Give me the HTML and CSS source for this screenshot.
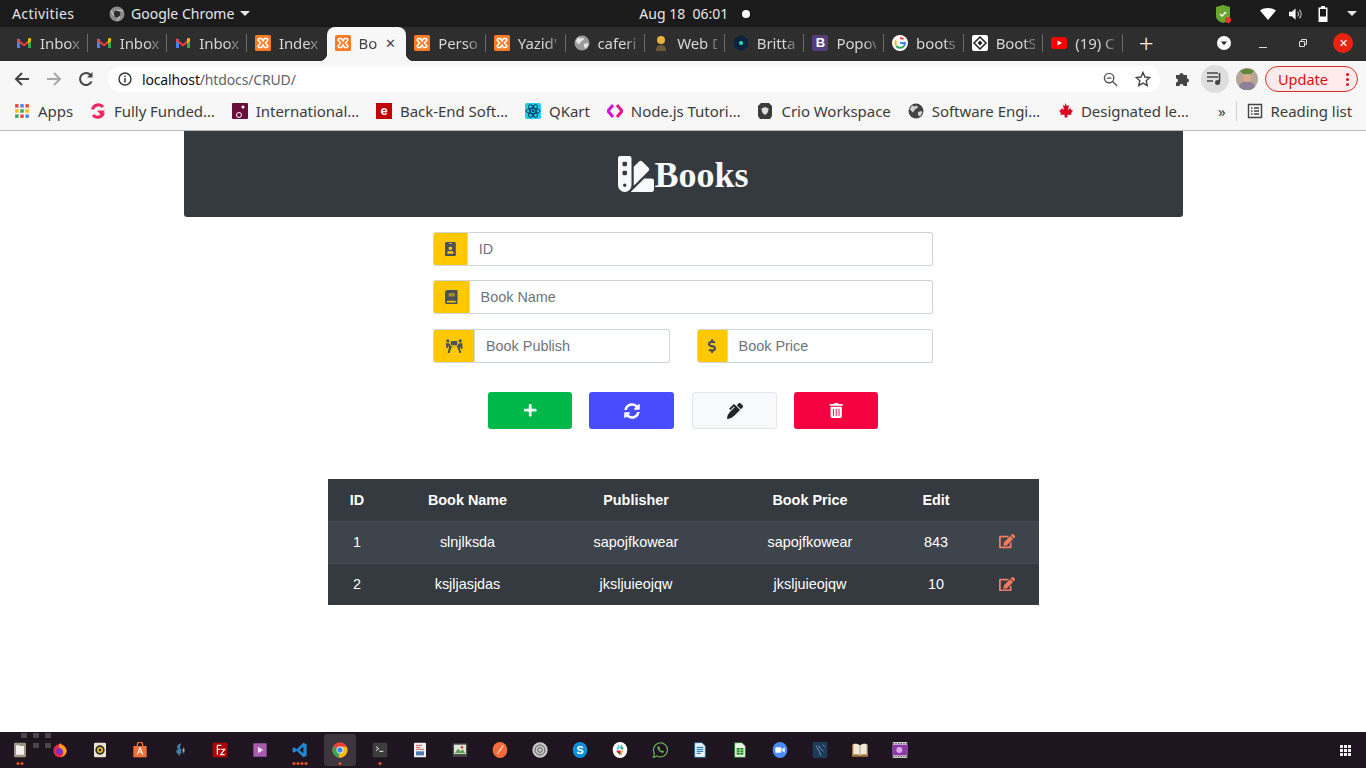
FILE: index.html
```html
<!DOCTYPE html>
<html lang="en">
<head>
    <meta charset="UTF-8">
    <title>Books</title>
    <link rel="stylesheet" href="styles.css">
</head>
<body>
    <svg class="defs" width="0" height="0">
        <symbol id="i-gmail" viewBox="0 0 16 16">
            <path d="M1 4v9h3V4z" fill="#4285f4"/><path d="M12 4v9h3V4z" fill="#34a853"/>
            <path d="M1 3l7 6 7-6v3L8 11.5 1 6z" fill="#ea4335"/><path d="M12 3.5l3-.5v3l-3 2.4z" fill="#fbbc04"/>
        </symbol>
        <symbol id="i-xampp" viewBox="0 0 16 16">
            <rect width="16" height="16" rx="1.5" fill="#fb7a24"/>
            <path d="M4 3.5h2.5L8 6l1.5-2.5H12l1 1.5-2.5 3 2.5 3-1 1.5H9.500L8 10l-1.500 2.500H4L3 11l2.500-3L3 5z" fill="none" stroke="#fff" stroke-width="1.500"/>
        </symbol>
        <symbol id="i-chrome" viewBox="0 0 24 24">
            <circle cx="12" cy="12" r="11.500" fill="#ea4335"/>
            <path d="M12 12L2 6.500A11.500 11.500 0 0 0 10 23.300z" fill="#34a853"/>
            <path d="M12 7h10A11.500 11.500 0 0 1 10 23.300z" fill="#fbbc04"/>
            <circle cx="12" cy="12" r="5.200" fill="#fff"/><circle cx="12" cy="12" r="4" fill="#4285f4"/>
        </symbol>
        <symbol id="i-globe" viewBox="0 0 16 16">
            <circle cx="8" cy="8" r="7.500" fill="currentColor"/>
            <path d="M4 2.500l3 1 2-1 1 2-3 2-2 3-2-2-1.500-1zM10 9l3.500-1 1 1.500-2.500 4-2-1.500z" fill="#fff" opacity=".75"/>
        </symbol>
        <symbol id="i-edit" viewBox="0 0 576 512">
            <path fill="currentColor" d="M402.6 83.2l90.2 90.2c3.8 3.8 3.8 10 0 13.8L274.4 405.6l-92.8 10.3c-12.4 1.4-22.9-9.1-21.5-21.5l10.3-92.8L388.8 83.2c3.8-3.8 10-3.8 13.8 0zm162-22.9l-48.8-48.8c-15.2-15.2-39.9-15.2-55.2 0l-35.4 35.4c-3.8 3.8-3.8 10 0 13.8l90.2 90.2c3.8 3.8 10 3.8 13.8 0l35.4-35.4c15.2-15.3 15.2-40 0-55.2zM384 346.2V448H64V128h229.8c3.2 0 6.2-1.3 8.5-3.5l40-40c7.6-7.6 2.2-20.5-8.5-20.5H48C21.5 64 0 85.5 0 112v352c0 26.5 21.5 48 48 48h352c26.5 0 48-21.5 48-48V306.2c0-10.7-12.9-16-20.5-8.5l-40 40c-2.2 2.3-3.5 5.3-3.5 8.500z"/>
        </symbol>
    </svg>

    <!-- desktop top bar -->
    <div class="topbar">
        <span class="activities">Activities</span>
        <span class="app-name">
            <svg class="app-icon" viewBox="0 0 16 16"><circle cx="8" cy="8" r="7.500" fill="#8a8a8a"/><circle cx="8" cy="8" r="3.200" fill="#2c2c2c"/><path d="M8 4.500h6M5 10L2 4.500M11 10l-3 5" stroke="#c4c4c4" stroke-width="1.200"/></svg>
            Google Chrome
            <span class="caret"></span>
        </span>
        <span class="clock">Aug 18&nbsp;&nbsp;06:01<span class="clock-dot"></span></span>
        <span class="tray">
            <svg class="tray-shield" viewBox="0 0 16 18"><path d="M1 2l7-2 7 2v9c0 4-4 6-7 7-3-1-7-3-7-7z" fill="#6aa62e"/><path d="M5 9l2 2 4-4" fill="none" stroke="#fff" stroke-width="1.500"/><circle cx="13" cy="15" r="3" fill="#e8352b"/></svg>
            <svg class="tray-wifi" viewBox="0 0 16 12"><path d="M0 2.500C4-.8 12-.8 16 2.500L8 12z" fill="#fff"/></svg>
            <svg class="tray-vol" viewBox="0 0 16 14"><path d="M0 4.500h3L7 1v12L3 9.500H0z" fill="#fff"/><path d="M9 4.500a3 3 0 0 1 0 5M11 2.500a6 6 0 0 1 0 9" fill="none" stroke="#bbb" stroke-width="1.200"/></svg>
            <svg class="tray-batt" viewBox="0 0 10 16"><path d="M3 0h4v1.500h2.500V16H.5V1.500H3z" fill="#fff"/><rect x="2" y="3" width="6" height="7.500" fill="#1a1a1a"/></svg>
            <span class="caret"></span>
        </span>
    </div>

    <!-- chrome tab strip -->
    <div class="tabstrip">
        <div class="tabs">
            <div class="tab"><svg class="fav"><use href="#i-gmail"/></svg><span class="tab-title">Inbox</span></div>
            <div class="tab"><svg class="fav"><use href="#i-gmail"/></svg><span class="tab-title">Inbox</span></div>
            <div class="tab"><svg class="fav"><use href="#i-gmail"/></svg><span class="tab-title">Inbox</span></div>
            <div class="tab no-sep"><svg class="fav"><use href="#i-xampp"/></svg><span class="tab-title">Index</span></div>
            <div class="tab active"><svg class="fav"><use href="#i-xampp"/></svg><span class="tab-title">Bo</span><span class="tab-close">✕</span></div>
            <div class="tab"><svg class="fav"><use href="#i-xampp"/></svg><span class="tab-title">Perso</span></div>
            <div class="tab"><svg class="fav"><use href="#i-xampp"/></svg><span class="tab-title">Yazid'</span></div>
            <div class="tab"><svg class="fav tab-globe"><use href="#i-globe"/></svg><span class="tab-title">caferi</span></div>
            <div class="tab">
                <svg class="fav" viewBox="0 0 16 16"><circle cx="8" cy="5" r="4" fill="#e8b23c"/><path d="M3 16c0-5 2-6 5-6s5 1 5 6z" fill="#6b5a3a"/></svg>
                <span class="tab-title">Web D</span>
            </div>
            <div class="tab">
                <svg class="fav" viewBox="0 0 16 16"><path d="M8 0l7 4v8l-7 4-7-4V4z" fill="#0c2340"/><circle cx="8" cy="8" r="2" fill="#2fe0b0"/></svg>
                <span class="tab-title">Britta</span>
            </div>
            <div class="tab">
                <span class="fav fav-boot">B</span>
                <span class="tab-title">Popov</span>
            </div>
            <div class="tab">
                <svg class="fav" viewBox="0 0 16 16"><circle cx="8" cy="8" r="8" fill="#fff"/><path d="M8 3a5 5 0 0 1 3.400 1.300" fill="none" stroke="#ea4335" stroke-width="2"/><path d="M4 5.500a5 5 0 0 0 0 5" fill="none" stroke="#fbbc04" stroke-width="2"/><path d="M4.200 11A5 5 0 0 0 11.500 11.500" fill="none" stroke="#34a853" stroke-width="2"/><path d="M8 8h5a5 5 0 0 1-1.500 3.500" fill="none" stroke="#4285f4" stroke-width="2"/></svg>
                <span class="tab-title">boots</span>
            </div>
            <div class="tab">
                <svg class="fav" viewBox="0 0 16 16"><rect width="16" height="16" rx="2" fill="#fff"/><path d="M8 2l6 6-6 6-6-6z" fill="none" stroke="#222" stroke-width="1.500"/><path d="M8 5.500L10.500 8 8 10.500 5.500 8z" fill="#222"/></svg>
                <span class="tab-title">BootS</span>
            </div>
            <div class="tab">
                <svg class="fav" viewBox="0 0 16 16"><rect y="2" width="16" height="12" rx="3" fill="#f00"/><path d="M6.500 5.500L11 8l-4.500 2.500z" fill="#fff"/></svg>
                <span class="tab-title">(19) C</span>
            </div>
        </div>
        <span class="new-tab">+</span>
        <span class="win-controls">
            <svg class="tab-search" viewBox="0 0 18 18"><circle cx="9" cy="9" r="9" fill="#fff"/><path d="M5 7h8l-4 5z" fill="#2f2e2e"/></svg>
            <span class="win-min"></span>
            <svg class="win-max" viewBox="0 0 8 8"><path d="M.5 2.500h5v5h-5zM2.500 2.500v-2h5v5h-2" fill="none" stroke="#ddd"/></svg>
            <span class="win-close">✕</span>
        </span>
    </div>

    <!-- chrome toolbar -->
    <div class="toolbar">
        <svg class="nav-icon" viewBox="0 0 16 16"><path d="M15 8H2M8 2L2 8l6 6" fill="none" stroke="#444" stroke-width="2"/></svg>
        <svg class="nav-icon" viewBox="0 0 16 16"><path d="M1 8h13M8 2l6 6-6 6" fill="none" stroke="#a8a8a8" stroke-width="2"/></svg>
        <svg class="nav-icon" viewBox="0 0 16 16"><path d="M13.500 10.500A6 6 0 1 1 12.500 4" fill="none" stroke="#444" stroke-width="2"/><path d="M14.500 1v5.500H9z" fill="#444"/></svg>
        <div class="omnibox">
            <svg class="info-icon" viewBox="0 0 14 14"><circle cx="7" cy="7" r="6" fill="none" stroke="#333" stroke-width="1.400"/><path d="M7 6v4.500M7 3.500v1.500" stroke="#333" stroke-width="1.500"/></svg>
            <span class="url">localhost<span class="url-path">/htdocs/CRUD/</span></span>
            <svg class="omni-zoom" viewBox="0 0 16 16"><circle cx="6.500" cy="6.500" r="5" fill="none" stroke="#555" stroke-width="1.500"/><path d="M10.500 10.500L15 15M4 6.500h5" stroke="#555" stroke-width="1.500"/></svg>
            <svg class="omni-star" viewBox="0 0 16 16"><path d="M8 1.500l2 4.500 4.800.5-3.600 3.200 1 4.800L8 12.100l-4.200 2.400 1-4.800L1.200 6.500 6 6z" fill="none" stroke="#444" stroke-width="1.400"/></svg>
        </div>
        <svg class="puzzle" viewBox="0 0 16 16"><path d="M1 4h3.500a2 2 0 1 1 4 0H12v3.500a2 2 0 1 1 0 4V15H8.500a2 2 0 1 0-4 0H1v-3.500a2 2 0 1 0 0-4z" fill="#444"/></svg>
        <span class="media-btn">
            <svg viewBox="0 0 16 14"><path d="M0 1h11M0 5h11M0 9h6" stroke="#444" stroke-width="1.600"/><path d="M12.500 1v9" stroke="#444" stroke-width="1.600"/><circle cx="10.500" cy="10.500" r="2.500" fill="#444"/></svg>
        </span>
        <svg class="avatar" viewBox="0 0 22 22"><circle cx="11" cy="11" r="11" fill="#b8a595"/><path d="M4 3a11 11 0 0 1 14 0l-3 3H7z" fill="#5d8a3c"/><circle cx="11" cy="10" r="4" fill="#d9ab8b"/><path d="M3 19c1-5 4-5 8-5s7 0 8 5a11 11 0 0 1-16 0z" fill="#8d8098"/></svg>
        <span class="update-btn">Update<span class="update-dots"><i></i><i></i><i></i></span></span>
    </div>

    <!-- bookmarks bar -->
    <div class="bookmarks">
        <span class="bm">
            <svg class="fav" viewBox="0 0 14 14">
                <path d="M1 1h3v3H1z" fill="#ea4335"/><path d="M5.500 1h3v3h-3z" fill="#4285f4"/><path d="M10 1h3v3h-3z" fill="#ea4335"/>
                <path d="M1 5.500h3v3H1z" fill="#fbbc04"/><path d="M5.500 5.500h3v3h-3z" fill="#34a853"/><path d="M10 5.500h3v3h-3z" fill="#fbbc04"/>
                <path d="M1 10h3v3H1z" fill="#34a853"/><path d="M5.500 10h3v3h-3z" fill="#ea4335"/><path d="M10 10h3v3h-3z" fill="#4285f4"/>
            </svg>Apps
        </span>
        <span class="bm">
            <svg class="fav" viewBox="0 0 16 16"><path d="M13 4A6 6 0 0 0 2.500 6.500M3 12a6 6 0 0 0 10.500-2.500" fill="none" stroke="#f0245f" stroke-width="3"/><path d="M7 7.500h8L11 12z" fill="#f0245f"/></svg>Fully Funded…
        </span>
        <span class="bm">
            <svg class="fav" viewBox="0 0 16 16"><rect width="16" height="16" rx="1" fill="#6a0f3c"/><circle cx="11" cy="4" r="1.500" fill="#fff"/><circle cx="7" cy="12" r="2.500" fill="none" stroke="#fff"/></svg>International…
        </span>
        <span class="bm">
            <span class="fav fav-edx">e</span>Back-End Soft…
        </span>
        <span class="bm">
            <svg class="fav" viewBox="0 0 16 16"><rect width="16" height="16" rx="2" fill="#22cfe8"/><g fill="none" stroke="#0b3d66"><ellipse cx="8" cy="8" rx="7" ry="2.700"/><ellipse cx="8" cy="8" rx="7" ry="2.700" transform="rotate(60 8 8)"/><ellipse cx="8" cy="8" rx="7" ry="2.700" transform="rotate(120 8 8)"/></g><circle cx="8" cy="8" r="1.300" fill="#0b3d66"/></svg>QKart
        </span>
        <span class="bm">
            <svg class="fav" viewBox="0 0 16 16"><path d="M6 2L1 8l5 6" fill="none" stroke="#d014e0" stroke-width="3"/><path d="M10 2l5 6-5 6" fill="none" stroke="#f0148c" stroke-width="3"/></svg>Node.js Tutori…
        </span>
        <span class="bm">
            <svg class="fav" viewBox="0 0 16 16"><path d="M1 3l3-3h8l3 3v10l-2 3H3l-2-3z" fill="#3b3b3b"/><path d="M8 4l3.500 1.500C11.500 9 10 11 8 12 6 11 4.500 9 4.500 5.500z" fill="#ddd"/></svg>Crio Workspace
        </span>
        <span class="bm">
            <svg class="fav bm-globe"><use href="#i-globe"/></svg>Software Engi…
        </span>
        <span class="bm">
            <svg class="fav" viewBox="0 0 16 16"><path d="M8 0l2 3 2-1-1 5 2.500-2 .5 2 2 .5-2 3 .5 1.500-4-.5-.2 3H7.700l-.2-3-4 .5.500-1.500-2-3 2-.5.500-2L7 7 6 2l2 1z" fill="#d80621"/></svg>Designated le…
        </span>
        <span class="bm-more">»</span>
        <span class="bm-sep"></span>
        <span class="bm">
            <svg class="fav" viewBox="0 0 16 16"><path d="M1.500 1.500h13v13h-13z" fill="none" stroke="#444" stroke-width="1.400"/><path d="M4 5h1.500M7 5h5M4 8h1.500M7 8h5M4 11h1.500M7 11h5" stroke="#444" stroke-width="1.400"/></svg>Reading list
        </span>
    </div>

    <!-- the actual page -->
    <main class="page">
        <header class="page-header">
            <h1 class="page-title">
                <svg class="title-icon" viewBox="0 0 512 512"><path fill="currentColor" d="M434.66,167.71h0L344.5,77.36a31.83,31.83,0,0,0-45-.07h0l-.07.07L224,152.88V424L434.66,212.9A32,32,0,0,0,434.66,167.71ZM480,320H373.09L186.68,506.51c-2.06,2.07-4.5,3.58-6.68,5.49H480a32,32,0,0,0,32-32V352A32,32,0,0,0,480,320ZM192,32A32,32,0,0,0,160,0H32A32,32,0,0,0,0,32V416a96,96,0,0,0,192,0ZM96,440a24,24,0,1,1,24-24A24,24,0,0,1,96,440Zm32-184a16,16,0,0,1-16,16H80a16,16,0,0,1-16-16V224a16,16,0,0,1,16-16h32a16,16,0,0,1,16,16Zm0-128a16,16,0,0,1-16,16H80a16,16,0,0,1-16-16V96A16,16,0,0,1,80,80h32a16,16,0,0,1,16,16Z"/></svg>Books
            </h1>
        </header>

        <form class="book-form">
            <div class="input-group">
                <span class="addon">
                    <svg class="addon-id" viewBox="0 0 384 512"><path fill="currentColor" d="M336 0H48C21.500 0 0 21.500 0 48v416c0 26.500 21.500 48 48 48h288c26.500 0 48-21.500 48-48V48c0-26.500-21.500-48-48-48zM144 32h96c8.800 0 16 7.200 16 16s-7.200 16-16 16h-96c-8.800 0-16-7.200-16-16s7.200-16 16-16zm48 128c35.300 0 64 28.700 64 64s-28.700 64-64 64-64-28.700-64-64 28.700-64 64-64zm112 236.800c0 10.600-10 19.200-22.400 19.200H102.400C90 416 80 407.400 80 396.800v-19.200c0-31.800 30.100-57.600 67.200-57.600h5c12.300 5.100 25.700 8 39.800 8s27.600-2.900 39.800-8h5c37.100 0 67.200 25.800 67.200 57.600v19.200z"/></svg>
                </span>
                <input class="field" type="text" placeholder="ID">
            </div>
            <div class="input-group">
                <span class="addon">
                    <svg class="addon-book" viewBox="0 0 448 512"><path fill="currentColor" d="M448 360V24c0-13.300-10.700-24-24-24H96C43 0 0 43 0 96v320c0 53 43 96 96 96h328c13.300 0 24-10.700 24-24v-16c0-7.500-3.500-14.300-8.900-18.700-4.200-15.400-4.200-59.300 0-74.700 5.400-4.300 8.900-11.100 8.900-18.600zM128 134c0-3.300 2.700-6 6-6h212c3.300 0 6 2.700 6 6v20c0 3.300-2.700 6-6 6H134c-3.300 0-6-2.700-6-6v-20zm0 64c0-3.300 2.700-6 6-6h212c3.300 0 6 2.700 6 6v20c0 3.300-2.700 6-6 6H134c-3.300 0-6-2.700-6-6v-20zm253.400 250H96c-17.700 0-32-14.300-32-32 0-17.600 14.400-32 32-32h285.400c-1.900 17.100-1.900 46.900 0 64z"/></svg>
                </span>
                <input class="field" type="text" placeholder="Book Name">
            </div>
            <div class="form-row">
                <div class="input-group">
                    <span class="addon">
                        <svg class="addon-carry" viewBox="0 0 18 14"><g fill="currentColor"><circle cx="2.800" cy="1.700" r="1.600"/><circle cx="15.200" cy="1.700" r="1.600"/><rect x="5.800" y="1.800" width="6.400" height="4.200"/><path d="M.8 4h3.400l1.800 3h6l1.800-3h3.400l.5 5.500-1.600.4-.5-2.500-.6 1.600 1.500 5.500h-1.800l-1.700-5-1-2.300H7l-1 2.300-1.700 5H2.500L4 8l-.6-1.600-.5 2.500-1.600-.4z"/></g></svg>
                    </span>
                    <input class="field" type="text" placeholder="Book Publish">
                </div>
                <div class="input-group">
                    <span class="addon addon-narrow">
                        <svg class="addon-dollar" viewBox="0 0 288 512"><path fill="currentColor" d="M209.200 233.400l-108-31.600C88.700 198.200 80 186.500 80 173.500c0-16.300 13.200-29.500 29.500-29.500h66.300c12.200 0 24.200 3.700 34.200 10.500 6.100 4.100 14.300 3.100 19.500-2l34.800-34c7.100-6.900 6.100-18.400-1.800-24.500C238 74.800 207.400 64.100 176 64V16c0-8.800-7.200-16-16-16h-32c-8.800 0-16 7.200-16 16v48h-2.500C45.800 64-5.400 118.700.5 183.600c4.200 46.100 39.400 83.600 83.800 96.600l102.500 30c12.500 3.700 21.200 15.300 21.200 28.300 0 16.300-13.200 29.500-29.500 29.500h-66.300C100 368 88 364.300 78 357.500c-6.100-4.100-14.300-3.100-19.500 2l-34.800 34c-7.100 6.900-6.100 18.400 1.800 24.500 24.500 19.200 55.100 29.900 86.500 30v48c0 8.800 7.200 16 16 16h32c8.800 0 16-7.200 16-16v-48.200c46.600-.9 90.300-28.600 105.700-72.700 21.500-61.600-14.600-124.800-72.500-141.700z"/></svg>
                    </span>
                    <input class="field" type="text" placeholder="Book Price">
                </div>
            </div>
            <div class="form-actions">
                <button class="btn btn-green" type="button">
                    <svg viewBox="0 0 448 512"><path fill="currentColor" d="M416 208H272V64c0-17.700-14.300-32-32-32h-32c-17.700 0-32 14.300-32 32v144H32c-17.700 0-32 14.300-32 32v32c0 17.700 14.300 32 32 32h144v144c0 17.700 14.300 32 32 32h32c17.700 0 32-14.300 32-32V304h144c17.700 0 32-14.300 32-32v-32c0-17.700-14.300-32-32-32z"/></svg>
                </button>
                <button class="btn btn-blue" type="button">
                    <svg viewBox="0 0 512 512"><path fill="currentColor" d="M370.720 133.280C339.458 104.008 298.888 87.962 255.848 88c-77.458.068-144.328 53.178-162.791 126.850-1.344 5.363-6.122 9.150-11.651 9.150H24.103c-7.498 0-13.194-6.807-11.807-14.176C33.933 94.924 134.813 8 256 8c66.448 0 126.791 26.136 171.315 68.685L463.030 40.970C478.149 25.851 504 36.559 504 57.941V192c0 13.255-10.745 24-24 24H345.941c-21.382 0-32.090-25.851-16.971-40.971l41.750-41.749zM32 296h134.059c21.382 0 32.090 25.851 16.971 40.971l-41.750 41.750c31.262 29.273 71.835 45.319 114.876 45.280 77.418-.07 144.315-53.144 162.787-126.849 1.344-5.363 6.122-9.150 11.651-9.150h57.304c7.498 0 13.194 6.807 11.807 14.176C478.067 417.076 377.187 504 256 504c-66.448 0-126.791-26.136-171.315-68.685L48.970 471.030C33.851 486.149 8 475.441 8 454.059V320c0-13.255 10.745-24 24-24z"/></svg>
                </button>
                <button class="btn btn-light" type="button">
                    <svg viewBox="0 0 512 512"><path fill="currentColor" d="M497.940 74.170l-60.110-60.110c-18.750-18.750-49.160-18.750-67.910 0l-56.550 56.550 128.020 128.020 56.550-56.550c18.750-18.750 18.750-49.150 0-67.910zm-246.800-20.530c-15.620-15.620-40.940-15.620-56.560 0L75.800 172.430c-6.250 6.250-6.250 16.380 0 22.620l22.630 22.630c6.250 6.250 16.380 6.250 22.630 0l101.820-101.820 22.630 22.620L93.950 290.030A327.038 327.038 0 0 0 .17 485.110l-.03.230c-1.700 15.280 11.210 28.200 26.490 26.510a327.020 327.020 0 0 0 195.340-93.800l196.790-196.790-82.770-82.770-84.850-84.850z"/></svg>
                </button>
                <button class="btn btn-red" type="button">
                    <svg viewBox="0 0 448 512"><path fill="currentColor" d="M32 464a48 48 0 0 0 48 48h288a48 48 0 0 0 48-48V128H32zm272-256a16 16 0 0 1 32 0v224a16 16 0 0 1-32 0zm-96 0a16 16 0 0 1 32 0v224a16 16 0 0 1-32 0zm-96 0a16 16 0 0 1 32 0v224a16 16 0 0 1-32 0zM432 32H312l-9.400-18.700A24 24 0 0 0 281.100 0H166.800a23.720 23.720 0 0 0-21.400 13.300L136 32H16A16 16 0 0 0 0 48v32a16 16 0 0 0 16 16h416a16 16 0 0 0 16-16V48a16 16 0 0 0-16-16z"/></svg>
                </button>
            </div>
        </form>

        <table class="book-table">
            <colgroup>
                <col class="col-id"><col class="col-name"><col class="col-pub"><col class="col-price"><col class="col-edit"><col class="col-action">
            </colgroup>
            <thead>
                <tr><th>ID</th><th>Book Name</th><th>Publisher</th><th>Book Price</th><th>Edit</th><th></th></tr>
            </thead>
            <tbody>
                <tr class="striped">
                    <td>1</td><td>slnjlksda</td><td>sapojfkowear</td><td>sapojfkowear</td><td>843</td>
                    <td><svg class="row-edit"><use href="#i-edit"/></svg></td>
                </tr>
                <tr>
                    <td>2</td><td>ksjljasjdas</td><td>jksljuieojqw</td><td>jksljuieojqw</td><td>10</td>
                    <td><svg class="row-edit"><use href="#i-edit"/></svg></td>
                </tr>
            </tbody>
        </table>
    </main>

    <!-- dock -->
    <div class="dock">
        <span class="dock-item has-dots">
            <svg viewBox="0 0 24 24"><rect x="3" y="1" width="18" height="22" rx="2" fill="#9c9582"/><path d="M6 5h5l1 1h6v13H6z" fill="#f1f0ec"/></svg>
            <span class="run"><i></i><i></i></span>
        </span>
        <span class="dock-item">
            <svg viewBox="0 0 24 24"><circle cx="12" cy="13" r="10" fill="#e6284f"/><path d="M12 1c2 4 9 5 10 12-1 6-5 9-9 9 4-2 5-6 3-9-2-2-4-1-5-3-1-3 0-6 1-9z" fill="#ffa41c"/><circle cx="11" cy="14" r="5" fill="#7d2fbf"/></svg>
        </span>
        <span class="dock-item">
            <svg viewBox="0 0 24 24"><rect x="3" y="1" width="18" height="22" rx="2" fill="#e9e4d2"/><circle cx="12" cy="12" r="7" fill="#2c2a26"/><circle cx="12" cy="12" r="4.500" fill="#e4c022"/><circle cx="12" cy="12" r="2" fill="#2c2a26"/></svg>
        </span>
        <span class="dock-item">
            <svg viewBox="0 0 24 24"><path d="M2 6h20v17H2z" fill="#f0703a"/><path d="M8 7V4a4 4 0 0 1 8 0v3" fill="none" stroke="#f0703a" stroke-width="2"/><path d="M12 8l-4 11M12 8l4 11M9.500 15h5" stroke="#fff" stroke-width="1.600"/></svg>
        </span>
        <span class="dock-item">
            <svg viewBox="0 0 24 24"><path d="M14 2C7 3 6 9 10 11c-4 0-5 5-1 7l3 4c-1-3 0-5 3-6-2-1-2-3 0-5-4 0-3-5-1-9z" fill="#3d7ea6"/><path d="M17 7c1 3-1 5-2 6 3 1 3 4 1 6 3-2 4-9 1-12z" fill="#9db3c2"/></svg>
        </span>
        <span class="dock-item">
            <svg viewBox="0 0 24 24"><rect x="1" y="1" width="22" height="22" fill="#b30000"/><path d="M8 5h6M8 5v14M8 11h4M13 11h6l-6 8h6" fill="none" stroke="#fff" stroke-width="1.800"/></svg>
        </span>
        <span class="dock-item">
            <svg viewBox="0 0 24 24"><rect x="2" y="2" width="20" height="20" rx="1" fill="#a85cb0"/><path d="M9 7l8 5-8 5z" fill="#f2e3f4"/></svg>
        </span>
        <span class="dock-item">
            <svg viewBox="0 0 24 24"><path d="M17 1l5 2.500v17L17 23 7 13l-4 3-2-1.500V9.500L3 8l4 3zM17 7l-6 5 6 5z" fill="#1f8ad2"/></svg>
            <span class="run"><i></i><i></i><i></i><i></i></span>
        </span>
        <span class="dock-item dock-active">
            <svg><use href="#i-chrome"/></svg>
            <span class="run"><i></i></span>
        </span>
        <span class="dock-item">
            <svg viewBox="0 0 24 24"><rect x="1" y="1" width="22" height="22" rx="2" fill="#3d3d3d"/><path d="M6 7l4 3-4 3" fill="none" stroke="#eee" stroke-width="1.500"/><path d="M11 14h6" stroke="#eee" stroke-width="1.500"/></svg>
            <span class="run"><i></i></span>
        </span>
        <span class="dock-item">
            <svg viewBox="0 0 24 24"><rect x="3" y="1" width="18" height="22" rx="1" fill="#eef0f2"/><path d="M6 5h9M6 8h6M6 11h12" stroke="#c9584e" stroke-width="1.400"/><rect x="6" y="14" width="12" height="6" fill="#4d7ab3"/></svg>
        </span>
        <span class="dock-item">
            <svg viewBox="0 0 24 24"><rect x="1" y="2" width="22" height="20" rx="1" fill="#4a4a4a"/><rect x="3" y="4" width="18" height="14" fill="#dfe8d8"/><path d="M4 17l5-7 4 4 3-3 4 6z" fill="#5f9b55"/><circle cx="15" cy="8" r="2" fill="#d34a3a"/></svg>
        </span>
        <span class="dock-item">
            <svg viewBox="0 0 24 24"><ellipse cx="12" cy="12" rx="11" ry="12" fill="#f26b3a"/><path d="M8 18L17 5" stroke="#ffe4d6" stroke-width="1.600"/></svg>
        </span>
        <span class="dock-item">
            <svg viewBox="0 0 24 24"><circle cx="12" cy="12" r="11.500" fill="#c8c8c8"/><circle cx="12" cy="12" r="7.500" fill="none" stroke="#5a5a5a" stroke-width="1.500"/><circle cx="12" cy="12" r="3.500" fill="none" stroke="#5a5a5a" stroke-width="1.500"/></svg>
        </span>
        <span class="dock-item">
            <svg viewBox="0 0 24 24"><ellipse cx="12" cy="12" rx="11" ry="12" fill="#0a90dc"/><text class="dock-s" x="12" y="18">S</text></svg>
        </span>
        <span class="dock-item">
            <svg viewBox="0 0 24 24"><ellipse cx="12" cy="12" rx="11" ry="12" fill="#fff"/><path d="M10 5v5M7 10h3" stroke="#36c5f0" stroke-width="2.400"/><path d="M14 5v5h3" stroke="#2eb67d" stroke-width="2.400"/><path d="M7 14h5v5" stroke="#e01e5a" stroke-width="2.400"/><path d="M14 14h3M14 14v5" stroke="#ecb22e" stroke-width="2.400"/></svg>
        </span>
        <span class="dock-item">
            <svg viewBox="0 0 24 24"><path d="M2 23l1.500-6A10.500 10.500 0 1 1 7.500 21z" fill="#1f1520" stroke="#68b04f" stroke-width="1.800"/><path d="M8 7c0 5 4 9 9 9l1-2-3-1.500-1 1c-1-.5-2-1.500-2.500-2.500l1-1L10 6z" fill="#68b04f"/></svg>
        </span>
        <span class="dock-item">
            <svg viewBox="0 0 24 24"><path d="M4 1h11l5 5v17H4z" fill="#e9f3fb" stroke="#0d6ea8"/><path d="M7 8h10M7 11h10M7 14h10M7 17h6" stroke="#0d6ea8" stroke-width="1.500"/></svg>
        </span>
        <span class="dock-item">
            <svg viewBox="0 0 24 24"><path d="M4 1h11l5 5v17H4z" fill="#eaf6e8" stroke="#13850f"/><rect x="7" y="9" width="10" height="10" fill="#13850f"/><path d="M7 12h10M7 15.500h10M12 9v10" stroke="#eaf6e8"/></svg>
        </span>
        <span class="dock-item">
            <svg viewBox="0 0 24 24"><ellipse cx="12" cy="12" rx="11" ry="12" fill="#4a8cff"/><rect x="5" y="8" width="9" height="8" rx="1.500" fill="#fff"/><path d="M15 11l4-3v8l-4-3z" fill="#fff"/></svg>
        </span>
        <span class="dock-item">
            <svg viewBox="0 0 24 24"><rect x="1" y="0" width="22" height="24" rx="2" fill="#1d3a58"/><path d="M6 5c2 6 5 7 7 15M10 5c1 4 4 5 7 9M16 4l3 3" fill="none" stroke="#a9c2d8"/></svg>
        </span>
        <span class="dock-item">
            <svg viewBox="0 0 24 24"><path d="M0 4c4-1 9-1 12 1 3-2 8-2 12-1v18H0z" fill="#a5753f"/><path d="M2 3c3-1 8 0 9.500 2v15C10 18 5 18 2 19zM22 3c-3-1-8 0-9.500 2v15c1.500-2 6.500-2 9.500-1z" fill="#efe9db"/></svg>
        </span>
        <span class="dock-item">
            <svg viewBox="0 0 24 24"><rect x="1" y="0" width="22" height="24" fill="#d8d8d8"/><rect x="1" y="4" width="22" height="16" fill="#8d37a8"/><circle cx="11" cy="12" r="4.500" fill="#d9a7e6"/><path d="M1 2h22M1 22h22" stroke="#333" stroke-dasharray="2 2" stroke-width="1.500"/></svg>
        </span>
        <span class="dock-grid"><i></i><i></i><i></i><i></i><i></i><i></i><i></i><i></i><i></i></span>
        <!-- the launching spinner drawn over the first dock icons -->
        <span class="dock-spinner"><i></i><i></i><i></i><i></i><i></i></span>
    </div>
</body>
</html>
```

FILE: styles.css
```css
:root {
    --ui-font: "Noto Sans", "Open Sans", sans-serif;
    --page-font: "Liberation Sans", Arial, sans-serif;
    --dark: #343a40;
    --yellow: #ffc800;
    --border-color: #ced4da;
}

* {
    margin: 0;
    padding: 0;
    box-sizing: border-box;
}

html, body {
    height: 100%;
    overflow: hidden;
}

body {
    display: flex;
    flex-direction: column;
    height: 768px;
    background-color: #fff;
    font-family: var(--page-font);
    font-size: 14.4px;
    color: #212529;
}

.defs {
    position: absolute;
}

/* ---- desktop top bar ---- */
.topbar {
    display: flex;
    align-items: center;
    flex: 0 0 27px;
    padding: 0 0 0 12px;
    background-color: #1b1b1b;
    color: #e6e6e6;
    font-family: var(--ui-font);
    font-size: 14px;
}

.activities {
    width: 97px;
    letter-spacing: .4px;
}

.app-name {
    display: flex;
    align-items: center;
    gap: 6px;
}

.app-icon {
    width: 16px;
    height: 16px;
}

.caret {
    width: 0;
    height: 0;
    border-left: 5px solid transparent;
    border-right: 5px solid transparent;
    border-top: 5px solid #e6e6e6;
}

.clock {
    display: flex;
    align-items: center;
    margin-left: 389px;
}

.clock-dot {
    width: 8px;
    height: 8px;
    margin-left: 14px;
    border-radius: 50%;
    background-color: #fff;
}

.tray {
    display: flex;
    align-items: center;
    margin-left: auto;
    padding-right: 9px;
}

.tray-shield {
    width: 16px;
    height: 18px;
    margin-right: 29px;
}

.tray-wifi {
    width: 16px;
    height: 12px;
    margin-right: 13px;
}

.tray-vol {
    width: 15px;
    height: 14px;
    margin-right: 14px;
}

.tray-batt {
    width: 10px;
    height: 16px;
    margin-right: 19px;
}

/* ---- tab strip ---- */
.tabstrip {
    display: flex;
    align-items: stretch;
    flex: 0 0 34px;
    padding-left: 8px;
    background-color: #2f2e2e;
    color: #d6d6d6;
    font-family: var(--ui-font);
    font-size: 15px;
    letter-spacing: -.1px;
}

.tabs {
    display: grid;
    grid-template-columns: repeat(14, minmax(0, 1fr));
    flex: none;
    width: 1115px;
}

.tab {
    display: flex;
    align-items: center;
    min-width: 0;
    padding: 0 8px 2px;
    position: relative;
}

.tab::after {
    content: "";
    position: absolute;
    right: 0;
    top: 7px;
    height: 18px;
    width: 1px;
    background-color: #6b6b6b;
}

.tab.no-sep::after {
    display: none;
}

.tab.active {
    background-color: #f7f7f7;
    color: #444;
    border-radius: 8px 8px 0 0;
}

/* the small flares at the foot of the active tab */
.tab.active::before,
.tab.active::after {
    content: "";
    position: absolute;
    top: auto;
    bottom: 0;
    width: 8px;
    height: 8px;
    background-color: transparent;
}

.tab.active::before {
    left: -8px;
    background-image: radial-gradient(circle at 0 0, transparent 8px, #f7f7f7 8.5px);
}

.tab.active::after {
    right: -8px;
    background-image: radial-gradient(circle at 100% 0, transparent 8px, #f7f7f7 8.5px);
}

.fav {
    flex: 0 0 16px;
    width: 16px;
    height: 16px;
    margin-right: 8px;
}

.tab-globe {
    color: #9a9a9a;
}

.fav-boot {
    display: block;
    border-radius: 2px;
    background-color: #563d7c;
    color: #fff;
    font-family: var(--page-font);
    font-weight: 700;
    font-size: 13px;
    line-height: 16px;
    text-align: center;
}

.tab-title {
    flex: 1;
    min-width: 0;
    white-space: nowrap;
    -webkit-mask-image: linear-gradient(90deg, #000 72%, rgba(0, 0, 0, .45) 90%);
    mask-image: linear-gradient(90deg, #000 72%, rgba(0, 0, 0, .45) 90%);
}

.tab-close {
    flex: 0 0 16px;
    font-size: 13px;
    color: #444;
    text-align: center;
}

.new-tab {
    width: 46px;
    text-align: center;
    font-size: 26px;
    line-height: 33px;
    font-weight: 300;
    color: #f2f2f2;
}

.win-controls {
    display: flex;
    align-items: center;
    flex: 1;
    padding-bottom: 2px;
}

.tab-search {
    width: 14px;
    height: 14px;
    margin-left: 48px;
}

.win-min {
    width: 8px;
    height: 1px;
    margin: 8px 0 0 28px;
    background-color: #ddd;
}

.win-max {
    width: 8px;
    height: 8px;
    margin-left: 32px;
}

.win-close {
    width: 20px;
    height: 20px;
    margin-left: 26px;
    border-radius: 50%;
    background-color: #e9230f;
    color: #fff;
    font-size: 11px;
    line-height: 20px;
    text-align: center;
}

/* ---- toolbar ---- */
.toolbar {
    display: flex;
    align-items: center;
    flex: 0 0 34px;
    padding: 2px 0 0 14px;
    background-color: #f7f7f7;
    font-family: var(--ui-font);
}

.nav-icon {
    width: 16px;
    height: 16px;
    margin-right: 16px;
}

.omnibox {
    display: flex;
    align-items: center;
    width: 1052px;
    height: 26px;
    margin-left: -2px;
    padding: 0 9px 0 10px;
    border-radius: 13px;
    background-color: #fff;
}

.info-icon {
    width: 14px;
    height: 14px;
    margin-right: 10px;
}

.url {
    flex: 1;
    font-size: 14px;
    letter-spacing: -.15px;
    color: #111;
}

.url-path {
    color: #5f6368;
}

.omni-zoom {
    width: 15px;
    height: 15px;
    margin-right: 17px;
}

.omni-star {
    width: 16px;
    height: 16px;
}

.puzzle {
    width: 16px;
    height: 16px;
    margin-left: 15px;
}

.media-btn {
    display: flex;
    align-items: center;
    justify-content: center;
    width: 28px;
    height: 28px;
    margin-left: 10px;
    border-radius: 50%;
    background-color: #dedede;
}

.media-btn svg {
    width: 16px;
    height: 14px;
}

.avatar {
    width: 22px;
    height: 22px;
    margin-left: 7px;
}

.update-btn {
    display: flex;
    align-items: center;
    justify-content: space-between;
    width: 93px;
    height: 26px;
    margin-left: 7px;
    padding: 0 8px 0 12px;
    border: 1px solid #d93025;
    border-radius: 13px;
    background-color: #fdeaea;
    color: #d80f16;
    font-size: 14.5px;
}

.update-dots {
    display: flex;
    flex-direction: column;
    gap: 2px;
}

.update-dots i {
    width: 3px;
    height: 3px;
    border-radius: 50%;
    background-color: #d80f16;
}

/* ---- bookmarks ---- */
.bookmarks {
    display: flex;
    align-items: center;
    flex: 0 0 36px;
    padding: 0 14px 4px 14px;
    background-color: #f7f7f7;
    border-bottom: 1px solid #b9b9b9;
    color: #3c3c3c;
    font-family: var(--ui-font);
    font-size: 15px;
    letter-spacing: -.05px;
    white-space: nowrap;
}

.bm {
    display: flex;
    align-items: center;
    margin-right: 17px;
}

.bm-globe {
    color: #444;
}

.fav-edx {
    display: block;
    background-color: #c20000;
    color: #fff;
    font-family: var(--page-font);
    font-weight: 700;
    font-size: 13px;
    line-height: 15px;
    text-align: center;
}

.bm-more {
    margin-left: auto;
    font-size: 15px;
}

.bm-sep {
    width: 1px;
    height: 20px;
    margin: 0 10px;
    background-color: #cfcfcf;
}

.bookmarks .bm:last-child {
    margin-right: 0;
}

/* ---- page ---- */
.page {
    flex: 1;
}

.page-header {
    width: 999px;
    height: 86px;
    margin-left: 184px;
    border-radius: 0 0 3px 3px;
    background-color: var(--dark);
    color: #f8f9fa;
    display: flex;
    align-items: center;
    justify-content: center;
}

.page-title {
    display: flex;
    align-items: center;
    padding-top: 2px;
    font-family: "Liberation Serif", "Times New Roman", serif;
    font-size: 36px;
    font-weight: 700;
    line-height: 1;
}

.title-icon {
    width: 36px;
    height: 36px;
    margin-top: -2px;
}

.book-form {
    width: 500px;
    margin: 15px 0 0 433px;
}

.input-group {
    display: flex;
    flex: 1 1 0;
    min-width: 0;
    height: 34px;
    margin-bottom: 14px;
}

.addon {
    display: flex;
    align-items: center;
    padding: 0 11px;
    border: 1px solid var(--border-color);
    border-radius: 3px 0 0 3px;
    background-color: var(--yellow);
    color: #495057;
}

.addon-narrow {
    padding: 0 10.5px;
}

.addon-id {
    width: 10.8px;
    height: 14.4px;
}

.addon-book {
    width: 12.6px;
    height: 14.4px;
}

.addon-carry {
    width: 18px;
    height: 14.4px;
}

.addon-dollar {
    width: 8.100px;
    height: 14.4px;
}

.field {
    flex: 1;
    width: 0;
    min-width: 0;
    padding: 0 11px;
    border: 1px solid var(--border-color);
    border-left: 0;
    border-radius: 0 3px 3px 0;
    font-family: var(--page-font);
    font-size: 14.4px;
    color: #495057;
}

.field::placeholder {
    color: #6c757d;
    opacity: 1;
}

.form-row {
    display: flex;
    gap: 27px;
    margin-top: 15px;
}

.form-actions {
    display: flex;
    justify-content: center;
    gap: 17px;
    margin-top: 15px;
}

.btn {
    display: flex;
    align-items: center;
    justify-content: center;
    width: 84px;
    height: 37px;
    border: 1px solid transparent;
    border-radius: 3px;
    color: #fff;
}

.btn svg {
    width: 14.4px;
    height: 14.4px;
}

.btn-green {
    background-color: #00b74a;
}

.btn-blue {
    width: 85px;
    background-color: #484cff;
}

.btn-blue svg,
.btn-light svg {
    width: 16px;
    height: 16px;
}

.btn-light {
    width: 85px;
    margin-left: 1px;
    background-color: #f8f9fa;
    border-color: #e2e6ea;
    color: #212529;
}

.btn-red {
    background-color: #f50041;
}

.btn-red svg {
    height: 15px;
}

/* ---- table ---- */
.book-table {
    width: 711px;
    margin: 50px 0 0 328px;
    border-collapse: collapse;
    table-layout: fixed;
    background-color: var(--dark);
    color: #fff;
    text-align: center;
}

.col-id { width: 58px; }
.col-name { width: 163px; }
.col-pub { width: 174px; }
.col-price { width: 174px; }
.col-edit { width: 78px; }
.col-action { width: 64px; }

.book-table th {
    height: 42px;
    font-weight: 700;
}

.book-table td {
    height: 42px;
    border-top: 1px solid #454d55;
    font-weight: 400;
}

.striped td {
    background-color: #3e444c;
}

.row-edit {
    display: block;
    width: 16.2px;
    height: 14.4px;
    margin: -1px auto 0;
    color: #f47c5d;
}

/* ---- dock ---- */
.dock {
    display: flex;
    align-items: center;
    flex: 0 0 36px;
    background-color: #1f1520;
    position: relative;
}

.dock-item {
    display: flex;
    align-items: center;
    justify-content: center;
    flex: 0 0 40px;
    height: 36px;
    position: relative;
}

.dock-item svg {
    width: 16px;
    height: 16px;
}

.dock-active::before {
    content: "";
    position: absolute;
    left: 4px;
    top: 2px;
    width: 32px;
    height: 32px;
    border-radius: 3px;
    background-color: #3d363e;
}

.dock-active svg {
    position: relative;
}

.run {
    display: flex;
    gap: 1px;
    position: absolute;
    bottom: 3px;
    left: 50%;
    transform: translateX(-50%);
}

.run i {
    width: 3px;
    height: 3px;
    border-radius: 50%;
    background-color: #e95420;
}

.dock-s {
    font-family: var(--page-font);
    font-size: 16px;
    font-weight: 700;
    fill: #fff;
    text-anchor: middle;
}

.dock-grid {
    display: grid;
    grid-template-columns: repeat(3, 3px);
    gap: 1px;
    margin-left: auto;
    margin-right: 15px;
}

.dock-grid i {
    width: 3px;
    height: 3px;
    background-color: #f0f0f0;
}

.dock-spinner {
    display: grid;
    grid-template-columns: repeat(3, 6px);
    gap: 5px 6px;
    position: absolute;
    left: 21px;
    top: 1px;
}

.dock-spinner i {
    width: 6px;
    height: 5px;
    background-color: rgba(120, 120, 120, .5);
}

.dock-spinner i:nth-child(4) {
    grid-column: 2;
}
```
